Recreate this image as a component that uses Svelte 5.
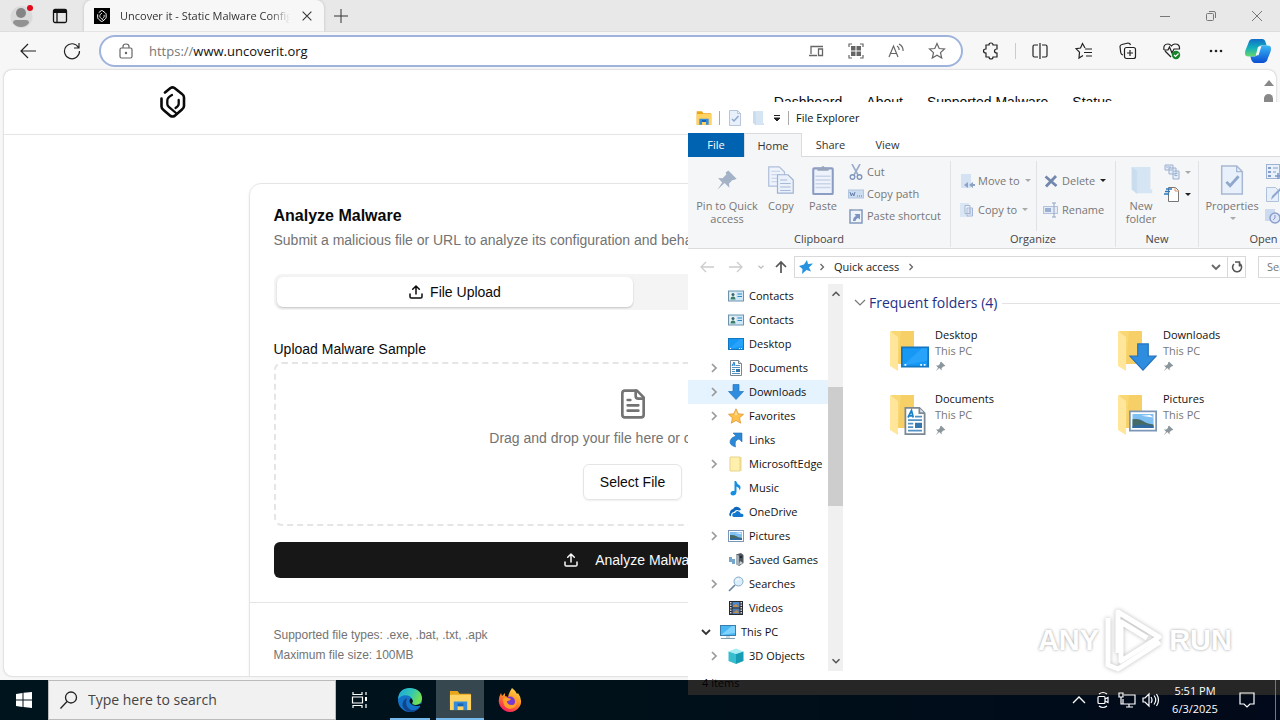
<script>
  const links = ['Dashboard', 'About', 'Supported Malware', 'Status'];
  const tree = [
    { label: 'Contacts', icon: 'contact' },
    { label: 'Contacts', icon: 'contact' },
    { label: 'Desktop', icon: 'desktop' },
    { label: 'Documents', icon: 'document', expandable: true },
    { label: 'Downloads', icon: 'download', expandable: true, active: true },
    { label: 'Favorites', icon: 'favorite', expandable: true },
    { label: 'Links', icon: 'link' },
    { label: 'MicrosoftEdge', icon: 'yellow', expandable: true },
    { label: 'Music', icon: 'music' },
    { label: 'OneDrive', icon: 'cloud' },
    { label: 'Pictures', icon: 'picture', expandable: true },
    { label: 'Saved Games', icon: 'games' },
    { label: 'Searches', icon: 'lens', expandable: true },
    { label: 'Videos', icon: 'video' },
    { label: 'This PC', icon: 'pc', root: true },
    { label: '3D Objects', icon: 'cube', expandable: true }
  ];
  const folders = [
    { label: 'Desktop', icon: 'desktop' },
    { label: 'Downloads', icon: 'download' },
    { label: 'Documents', icon: 'document' },
    { label: 'Pictures', icon: 'picture' }
  ];
</script>

{#snippet glyph(name, size = 16)}
  <svg width={size} height={size} viewBox="0 0 16 16" fill="none" aria-hidden="true">
    {#if name === 'contact'}
      <rect x=".5" y="3" width="15" height="10" fill="#cfe8f7" stroke="#6f93ad" />
      <rect x="2" y="4.500" width="6" height="7" fill="#e9f4ef" />
      <circle cx="5" cy="6.500" r="1.500" fill="#3c6470" /><path d="M2.500 11.500q0-3 2.500-3t2.500 3z" fill="#3c7d6c" />
      <path d="M9.500 6h4.500M9.500 8.500h4.500" stroke="#3985c0" />
    {:else if name === 'desktop'}
      <rect x=".5" y="2.500" width="15" height="11" fill="#1698f5" stroke="#1276c0" />
      <path d="M1 13 12 3h3v7z" fill="#35aaff" opacity=".6" /><path d="M2 12.500h1m8 0h1m1 0h1" stroke="#fff" />
    {:else if name === 'document'}
      <path d="M2.500.5h8l3 3v12h-11z" fill="#fff" stroke="#7b8791" /><path d="M10.500.5v3h3" fill="#dfe8ee" stroke="#7b8791" />
      <path d="M4 6 6 2l1 4M4.500 5h2" stroke="#1c80c8" /><path d="M8 5.500h4M4 7.500h8M4 9.500h3M4 11.500h3M4 13.500h8" stroke="#5293c4" />
      <rect x="8" y="9" width="4" height="3" fill="#3576ad" />
    {:else if name === 'download'}
      <path d="M5 .5h6v7h4.500L8 15.500.5 7.500H5z" fill="#2f8de0" stroke="#2673bd" stroke-width=".7" />
    {:else if name === 'favorite'}
      <path d="m8 .8 2.200 5 5.300.5-4 3.600 1.200 5.300L8 12.400l-4.700 2.800 1.200-5.300-4-3.600 5.300-.5z" fill="#ffc24d" stroke="#df9433" stroke-width=".8" /><path d="m8 3 1.500 4-3 .2z" fill="#ffe09a" />
    {:else if name === 'link'}
      <path d="M5 1h9v9l-3-3q-5 1-3.500 8Q1 13 2.200 8.500 3.500 5 8 4z" fill="#2c87d6" stroke="#2371b7" stroke-width=".6" />
    {:else if name === 'yellow'}
      <path d="M2 1h10v14H2z" fill="#fff0ae" stroke="#e7d48a" /><path d="M12 1h1.500v14H12z" fill="#ecd98d" />
    {:else if name === 'music'}
      <path d="M8 1q1 3 3.500 4.200 2 2 0 5.300 0-3-3-4V12q-.5 3.500-3.500 3.500-2.500 0-2.500-2 0-2.500 4-2.700V1z" fill="#168ee2" />
    {:else if name === 'cloud'}
      <path d="M3 12.500q-3-1.300-1-4Q2 5.500 5 5q2-3.500 6-1.500 1.500.8 2 2.500l-2 .5Q8 5 6 8q-2.500.2-3 2.500z" fill="#0c67bd" />
      <path d="M6 13q-2.500-.5-1.500-3 1-1.500 2.500-1 1.500-3 4-1.500 1.200.6 1.500 2 3 .2 3 2 0 1.500-2 1.500z" fill="#1278cf" />
    {:else if name === 'picture'}
      <rect x=".5" y="2.500" width="15" height="11" fill="#fff" stroke="#7c96b8" /><rect x="2" y="4" width="12" height="8" fill="#7fc0f3" />
      <path d="M2 9V7q4-.5 6 1t6 2v2H2z" fill="#466a66" /><path d="M2 11q5-2 12 0v1H2z" fill="#306aa1" /><path d="m7 5 5-.5L14 6z" fill="#fff" />
    {:else if name === 'games'}
      <path d="M8 2.500 13 1l2.500 2v8L11 14l-3-2z" fill="#51575f" /><path d="m8 2.500 3 1V14l-3-2z" fill="#a5b0b7" />
      <path d="M1 5h3v2h3v5H4v-2H1z" fill="#74a6ce" /><circle cx="13" cy="5" r="1.300" fill="#242a32" /><path d="m12 9 3 2-4 2z" fill="#cfd4d7" />
    {:else if name === 'lens'}
      <circle cx="10.500" cy="5.500" r="4.500" fill="#d9effb" stroke="#8aaac6" /><path d="m7 9-6 6" stroke="#6d87a3" stroke-width="1.700" /><path d="M8 5q1-2 3-2" stroke="#fff" />
    {:else if name === 'video'}
      <rect x="1" y="1" width="14" height="14" fill="#26292f" /><rect x="4.500" y="2" width="7" height="5.500" fill="#5187c6" /><rect x="4.500" y="8.500" width="7" height="5.500" fill="#557eaf" />
      <path d="m5 6 3-2 3 3H5zm0 7 4-3 2 3z" fill="#c38f46" /><path d="M2.800 2v12M13.200 2v12" stroke="#fff" stroke-width="1.200" stroke-dasharray="1.500 1" />
    {:else if name === 'pc'}
      <rect x=".5" y="1.500" width="15" height="10" fill="#49b7f4" stroke="#397dab" /><path d="M1 11 12 2h3v7z" fill="#80d3ff" /><path d="M6 12h4v2H6z" fill="#c9d7e0" /><path d="M1 14.500h14" stroke="#7e9cb0" />
    {:else if name === 'cube'}
      <path d="m8 .5 7.500 3L8 6 .5 3.500z" fill="#a6edf5" /><path d="M.5 3.500 8 6v10l-7.500-3z" fill="#36bdcf" /><path d="M15.500 3.500 8 6v10l7.500-3z" fill="#159db5" />
    {:else if name === 'pin'}
      <path d="m9 1 6 6-2 1-1 0-2.500 2.500.2 3.200-3.500-3.500L1 15l3.500-5.200L1.500 6.500l3.300.2L7.500 4 7 2.500z" fill="currentColor" />
    {:else if name === 'upload'}
      <path d="M8 10V2M4.700 5.300 8 2l3.300 3.300M2 10v2.700q0 1.300 1.300 1.300h9.400q1.300 0 1.300-1.300V10" stroke="currentColor" stroke-width="1.500" stroke-linecap="round" stroke-linejoin="round" />
    {:else if name === 'close'}
      <path d="m3 3 10 10M13 3 3 13" stroke="currentColor" stroke-width="1.200" />
    {:else if name === 'right'}
      <path d="m6 4 4 4-4 4" stroke="currentColor" stroke-width="1.700" />
    {:else if name === 'down'}
      <path d="m4 6 4 4 4-4" stroke="currentColor" stroke-width="1.800" />
    {:else if name === 'up'}
      <path d="m4 10 4-4 4 4" stroke="currentColor" stroke-width="1.800" />
    {:else if name === 'props'}
      <path d="M2.500.5h8l3 3v12h-11z" fill="#e8f0fc" stroke="#a8b8d2" stroke-width=".8" /><path d="M10.500.5v3h3" stroke="#a8b8d2" stroke-width=".7" /><path d="m5 9 2 2 4.500-5" stroke="#8fa7cb" stroke-width="1.500" />
    {:else if name === 'newfolder'}
      <path d="M3 1h10v12h1v2H5z" fill="#d6e5f3" /><path d="M3 1 6 3v12.500L3 13z" fill="#c9ddef" />
    {:else if name === 'copy'}
      <path d="M1 .5h6l3 3v8H1z" fill="#eff4fc" stroke="#aebfdb" stroke-width=".7" /><path d="M2.500 3h5M2.500 5h5M2.500 7h5M2.500 9h5" stroke="#c1cfe5" stroke-width=".6" /><path d="M6 5h6l3 3v7.500H6z" fill="#eaf1fb" stroke="#9eb3d3" stroke-width=".7" /><path d="M7.500 8h4M7.500 10h6M7.500 12h6M7.500 14h6" stroke="#a5b9d8" stroke-width=".6" />
    {:else if name === 'paste'}
      <rect x="2.800" y="1.800" width="10.400" height="13.700" rx=".5" fill="#edf2fb" stroke="#8c9dc4" stroke-width="1.100" /><path d="M5 3V1.500h2q1-2 2 0h2V3z" fill="#98a4bb" /><path d="M4 6h8M4 8h8M4 10h8M4 12h8" stroke="#c9d4e8" stroke-width=".7" />
    {:else if name === 'cut'}
      <path d="m4 0 6 11M12 0 6 11" stroke="#9aaccc" stroke-width="1.600" /><circle cx="4.500" cy="13" r="2.300" stroke="#8197bc" stroke-width="1.500" /><circle cx="11.500" cy="13" r="2.300" stroke="#8197bc" stroke-width="1.500" />
    {:else if name === 'path'}
      <rect x=".5" y="4" width="15" height="8" fill="#ccdcf1" stroke="#b2c5e1" /><path d="m2 6 1.300 4L4.500 7l1.300 3L7 6M9 10h1m1 0h1m1 0h1" stroke="#647fa9" />
    {:else if name === 'shortcut'}
      <rect x="2" y="2" width="12" height="13" fill="#eff4fc" stroke="#8299bd" stroke-width="1.500" /><path d="M5 3V1h6v2" fill="#aab7cc" /><path d="M5 13q0-4 3-5L6.500 6H12v5.500L10 10q-2 .5-2.500 3z" fill="#7b95bf" />
    {:else if name === 'move'}
      <path d="M2 1h10v14H2z" fill="#d4e2f3" /><path d="m14 9-4 3 4 3v-2h2v-2h-2zM9 9l-4 3 4 3z" fill="#8ca3c7" />
    {:else if name === 'copyto'}
      <path d="M1 1h9v14H1z" fill="#dbe6f4" /><path d="M6 3.500h5v8H6zM8 6h5.500v8H8z" fill="#edf3fb" stroke="#a4b6d5" /><path d="M9.500 8h3m-3 2h3m-3 2h3" stroke="#a4b6d5" />
    {:else if name === 'delete'}
      <path d="m2.500 3.500 11 9.500M13 3 3 13.500" stroke="#7388ac" stroke-width="2.800" />
    {:else if name === 'rename'}
      <rect x=".5" y="4.500" width="14" height="7" fill="#e3ebf7" stroke="#b3c3de" /><path d="M2 6h6v4H2z" fill="#9bb0d1" /><path d="M9 1h4M9 15h4M11 1v14" stroke="#91a4c4" />
    {:else if name === 'items'}
      <path d="M1 1h8v5H1zM5 4h7v6H5zM9 7h6v8H9z" fill="#e4edf8" stroke="#9cb1cf" /><path d="M2 3h5M10.500 9.500h3m-3 2h3" stroke="#9cb1cf" />
    {:else if name === 'easy'}
      <path d="M4.500 1.500h7l3 3v11h-10z" fill="#fff" stroke="#777" /><path d="M11 1v4h4" stroke="#d39365" /><path d="M2 3h6M1 5.500h5M0 8h5" stroke="#277ac0" stroke-width="1.300" />
    {:else if name === 'open'}
      <rect x="1.500" y=".5" width="13" height="14" fill="#e8f0fb" stroke="#9eb2d4" /><path d="M3 3h3v2H3zM3 7h3v2H3zM3 11h3v2H3z" fill="#849ec9" /><path d="M8 4h5M8 8h3" stroke="#849ec9" /><path d="M10 12h6m-3-3v6" stroke="#7c97c5" stroke-width="1.500" />
    {:else if name === 'edit'}
      <path d="M1.500 1.500h9l3 3v11h-12z" fill="#e7effa" stroke="#b0c1dc" /><path d="m6 14 1-4 8-8 1 2-8 8z" fill="#90a8ce" />
    {:else if name === 'history'}
      <path d="M0 1h10v12H0z" fill="#cddbf0" /><circle cx="10" cy="10" r="5" fill="#dfe6fa" stroke="#8ba0cc" stroke-width="1.500" /><path d="M10 7v3l-2 2" stroke="#8098c8" />
    {/if}
  </svg>
{/snippet}

{#snippet explorerIcon(size = 18)}
  <svg width={size} height={size} viewBox="0 0 24 24" aria-hidden="true">
    <path d="M1 2h8l2 3h11q1 0 1 1v16H1z" fill="#e9a61b" /><path d="M1 6h22v16H1z" fill="#ffd264" /><path d="M5 22v-9h14v9h-4v-4H9v4z" fill="#368bd8" /><path d="M9 15h6v3H9z" fill="#1465b4" />
  </svg>
{/snippet}

{#snippet mark(size)}
  <svg width={size} height={size} viewBox="0 0 32 32" fill="none" stroke="currentColor" stroke-width="2.600" stroke-linejoin="round" stroke-linecap="round" aria-hidden="true">
    <path d="M8 6.500 13.500 2q2-1.300 4 0L25 8q2 1.300 2 3.500V20q0 2-2 3.500L17.500 30q-2 1-4 0L6.500 24q-2-1.500-2-3.500v-8" /><path d="M15 9q-4.700 2.500-4.700 5.500V18q0 1.500 1.500 2.800L19 27M21.700 14v4q0 2-3.200 4" stroke-width="2.300" />
  </svg>
{/snippet}

<div class="desktop">
  <main class="browser">
    <div class="tabstrip">
      <button class="profile" aria-label="Profile">
        <svg width="24" height="26" viewBox="0 0 24 26"><circle cx="11.500" cy="14" r="11" fill="#dadada" /><circle cx="11" cy="10" r="5" fill="#858585" /><path d="M3 20q0-3 3-3h10q3 0 3 3-3 4-8 4t-8-4z" fill="#929292" /><circle cx="20" cy="5" r="3" fill="#e00b1c" /></svg>
      </button>
      <button class="actions" aria-label="Tab actions">
        <svg width="16" height="16" viewBox="0 0 16 16" fill="none" stroke="#111" stroke-width="1.300"><rect x="1.500" y="1.500" width="13" height="13" rx="1.500" /><path d="M1.500 3.500h13" stroke-width="3" /><path d="M5 3v11" /></svg>
      </button>
      <div class="tab">
        <span class="favicon">{@render mark(12)}</span>
        <span class="tabtitle">Uncover it - Static Malware Config</span>
        <button class="tabclose" aria-label="Close tab">{@render glyph('close', 14)}</button>
      </div>
      <button class="plus" aria-label="New tab"><svg width="16" height="16" viewBox="0 0 16 16" stroke="#333"><path d="M8 1v14M1 8h14" /></svg></button>
      <div class="controls">
        <button aria-label="Minimize"><svg width="12" height="12" viewBox="0 0 12 12" stroke="#777"><path d="M1 6.500h10" /></svg></button>
        <button aria-label="Restore"><svg width="12" height="12" viewBox="0 0 12 12" fill="none" stroke="#777"><rect x="1.500" y="3.500" width="7" height="7" rx="1" /><path d="M4 1.500h5q1.500 0 1.500 1.500v5" /></svg></button>
        <button aria-label="Close"><svg width="12" height="12" viewBox="0 0 12 12" stroke="#777"><path d="m1 1 10 10M11 1 1 11" /></svg></button>
      </div>
    </div>

    <div class="toolbar">
      <button aria-label="Back"><svg width="18" height="18" viewBox="0 0 18 18" fill="none" stroke="#222" stroke-width="1.200"><path d="M17 9H2M9 2 2 9l7 7" /></svg></button>
      <button aria-label="Refresh"><svg width="18" height="18" viewBox="0 0 18 18" fill="none" stroke="#222" stroke-width="1.200"><path d="M15.500 5.500A7.500 7.500 0 1 0 16.500 9M16 1v5h-5" /></svg></button>
      <div class="address">
        <svg width="14" height="16" viewBox="0 0 14 16" fill="none" stroke="#666" stroke-width="1.200"><rect x="1" y="5" width="12" height="10" rx="1.500" /><path d="M4 5V3.500Q4 1 7 1t3 2.500V5" /><circle cx="7" cy="10" r=".6" fill="#666" /></svg>
        <span class="url"><span>https://</span>www.uncoverit.org</span>
        <button aria-label="Send to devices"><svg width="16" height="16" viewBox="0 0 16 16" fill="none" stroke="#666" stroke-width="1.300"><path d="M3 11V3.500h12M1 12.500h8M10.500 6h4v6.500h-4z" /></svg></button>
        <button aria-label="QR code"><svg width="16" height="16" viewBox="0 0 16 16" fill="#666"><path d="M3 3h4.500v4.500H3zM8.500 3H13v4.500H8.500zM3 8.500h4.500V13H3zM8.500 8.500H13V13H8.500z" /><path d="M1 4V1h3m8 0h3v3m0 8v3h-3m-8 0H1v-3" fill="none" stroke="#666" stroke-width="1.200" /></svg></button>
        <button aria-label="Read aloud"><svg width="16" height="16" viewBox="0 0 16 16" fill="none" stroke="#666" stroke-width="1.200"><path d="M1 14 5.500 3 10 14M2.500 10.500h6M9 3q2.500 1.500 2 4M11 1q4.500 2.500 4 7" /></svg></button>
        <button aria-label="Add to favorites"><svg width="18" height="18" viewBox="0 0 18 18" fill="none" stroke="#666" stroke-width="1.200"><path d="m9 1.500 2.200 5 5.300.5-4 3.600 1.200 5.400L9 13.200 4.300 16l1.200-5.400-4-3.600 5.300-.5z" /></svg></button>
      </div>
      <div class="tools">
        <button aria-label="Extensions"><svg width="18" height="18" viewBox="0 0 18 18" fill="none" stroke="#222" stroke-width="1.200"><path d="M4 3h3q0-2 2-2t2 2h4v4q-2.500 0-2.500 2t2.500 2v4h-4q0 2-2 2t-2-2H4v-4q-2.500 0-2.500-2T4 7z" /></svg></button>
        <span class="rule"></span>
        <button aria-label="Split screen"><svg width="18" height="18" viewBox="0 0 18 18" fill="none" stroke="#222" stroke-width="1.200"><path d="M7 3H3.500Q2 3 2 4.500v9Q2 15 3.500 15H7M11 3h3.500Q16 3 16 4.500v9q0 1.500-1.500 1.500H11M9 1v16" /></svg></button>
        <button aria-label="Favorites"><svg width="18" height="18" viewBox="0 0 18 18" fill="none" stroke="#222" stroke-width="1.200"><path d="M10 6 7.500 1.500 5.500 6l-4.500.7 3.500 3.500L4 16l4-2.500M10 7h7M9 10.500h8M11 14h6" /></svg></button>
        <button aria-label="Collections"><svg width="18" height="18" viewBox="0 0 18 18" fill="none" stroke="#222" stroke-width="1.200"><path d="M4 13q-2-.5-2.300-2.500L1 4.500Q1 3 3 2.500L9 1q2 0 2.500 2" /><rect x="5.500" y="5.500" width="11" height="11" rx="2" /><path d="M11 8v6m-3-3h6" /></svg></button>
        <button aria-label="Browser essentials"><svg width="18" height="18" viewBox="0 0 18 18" fill="none" stroke="#222" stroke-width="1.200"><path d="M8 15 2 9M1 8q-1-6 4-6 2 0 3.500 2Q10 2 12 2q5 0 4.500 5M1 8h4l1.500-3L9 11l2-4h6" /><circle cx="13" cy="13" r="4.200" fill="#168529" stroke="none" /><path d="m11 13 1.500 1.500 3-3" stroke="#fff" /></svg></button>
        <button aria-label="Settings and more"><svg width="18" height="18" viewBox="0 0 18 18" fill="#222"><circle cx="4" cy="9" r="1.300" /><circle cx="9" cy="9" r="1.300" /><circle cx="14" cy="9" r="1.300" /></svg></button>
        <button aria-label="Copilot">
          <svg width="26" height="26" viewBox="0 0 24 24">
            <defs><linearGradient id="cpa" x2="0" y2="1"><stop stop-color="#116fc9" /><stop offset=".5" stop-color="#11aebd" /><stop offset="1" stop-color="#65d86a" /></linearGradient><linearGradient id="cpb" x2="0" y2="1"><stop stop-color="#39b7f5" /><stop offset="1" stop-color="#0a4fd3" /></linearGradient></defs>
            <path d="M7 1h9q2 0 3 3l1 3h-5q-2 0-3 3l-1.500 6q-.5 1-2 1H3q-3 0-3-3 0-2 1-4l2-5q1-4 4-4z" fill="url(#cpa)" /><path d="M17 23H9q-3 0-4-6h4q2 0 2.500-2L14 9q.5-2 3-2h4q3 0 3 3 0 2-1 4l-2 5q-1 4-4 4z" fill="url(#cpb)" /><path d="M12 8h3l-2.500 8H10z" fill="#f7f7f7" />
          </svg>
        </button>
      </div>
    </div>

    <div class="viewport">
      <div class="page">
        <header>
          <a class="brand" href="#home" aria-label="Uncover it">{@render mark(32)}</a>
          <nav>{#each links as l}<a href="#{l}">{l}</a>{/each}</nav>
        </header>
        <section class="card">
          <div class="cardbody">
            <h1>Analyze Malware</h1>
            <p class="lead">Submit a malicious file or URL to analyze its configuration and behavior</p>
            <div class="segments">
              <button class="on">{@render glyph('upload')}File Upload</button>
              <button>URL</button>
            </div>
            <div class="samplelabel">Upload Malware Sample</div>
            <div class="drop">
              <svg width="32" height="32" viewBox="0 0 24 24" fill="none" stroke="#737373" stroke-width="2" stroke-linecap="round" stroke-linejoin="round"><path d="M15 2H6a2 2 0 0 0-2 2v16a2 2 0 0 0 2 2h12a2 2 0 0 0 2-2V7Z" /><path d="M14 2v4a2 2 0 0 0 2 2h4M10 9H8M16 13H8M16 17H8" /></svg>
              <p>Drag and drop your file here or click to browse</p>
              <button>Select File</button>
            </div>
            <button class="submit">{@render glyph('upload')}Analyze Malware</button>
          </div>
          <footer><p>Supported file types: .exe, .bat, .txt, .apk</p><p>Maximum file size: 100MB</p></footer>
        </section>
      </div>
      <div class="pagescroll"><svg width="10" height="6" viewBox="0 0 10 6"><path d="M0 6 5 0l5 6z" fill="#888" /></svg><span></span></div>
    </div>
  </main>

  <section class="explorer" aria-label="File Explorer">
    <div class="caption">
      {@render explorerIcon(16)}<span class="rule"></span>
      {@render glyph('props')}{@render glyph('newfolder')}
      <svg width="8" height="8" viewBox="0 0 8 8"><path d="M1 1.500h6M1 4h6L4 7z" stroke="#222" fill="#222" /></svg>
      <span class="rule"></span><span>File Explorer</span>
    </div>
    <div class="ribbontabs"><button class="file">File</button><button class="home">Home</button><button>Share</button><button>View</button></div>
    <div class="ribbon">
      <div class="group clip">
        <div class="commands">
          <button class="big wideart"><span class="art">{@render glyph('pin', 22)}</span>Pin to Quick access</button>
          <button class="big short"><span class="art">{@render glyph('copy', 28)}</span>Copy</button>
          <button class="big short"><span class="art">{@render glyph('paste', 30)}</span>Paste</button>
          <div class="stack">
            <button>{@render glyph('cut')}Cut</button><button>{@render glyph('path')}Copy path</button><button>{@render glyph('shortcut')}Paste shortcut</button>
          </div>
        </div>
        <h2>Clipboard</h2>
      </div>
      <div class="group organize">
        <div class="commands">
          <div class="stack wide"><button>{@render glyph('move')}Move to<i></i></button><button>{@render glyph('copyto')}Copy to<i></i></button></div>
          <div class="stack wide divided"><button>{@render glyph('delete')}Delete<i class="dark"></i></button><button>{@render glyph('rename')}Rename</button></div>
        </div>
        <h2>Organize</h2>
      </div>
      <div class="group new">
        <div class="commands">
          <button class="big short"><span class="art">{@render glyph('newfolder', 30)}</span>New folder</button>
          <div class="stack"><button aria-label="New item">{@render glyph('items')}<i></i></button><button aria-label="Easy access">{@render glyph('easy')}<i class="dark"></i></button></div>
        </div>
        <h2>New</h2>
      </div>
      <div class="group opening">
        <div class="commands">
          <button class="big wideart"><span class="art">{@render glyph('props', 30)}</span>Properties<i></i></button>
          <div class="stack"><button aria-label="Open">{@render glyph('open')}</button><button aria-label="Edit">{@render glyph('edit')}</button><button aria-label="History">{@render glyph('history')}</button></div>
        </div>
        <h2>Open</h2>
      </div>
    </div>
    <div class="location">
      <button aria-label="Back"><svg width="14" height="12" viewBox="0 0 14 12" fill="none" stroke="#ccc" stroke-width="1.300"><path d="M14 6H2M6 1 1 6l5 5" /></svg></button>
      <button aria-label="Forward"><svg width="14" height="12" viewBox="0 0 14 12" fill="none" stroke="#ccc" stroke-width="1.300"><path d="M0 6h12M8 1l5 5-5 5" /></svg></button>
      <button class="recent" aria-label="Recent locations">{@render glyph('down', 10)}</button>
      <button aria-label="Up"><svg width="14" height="14" viewBox="0 0 14 14" fill="none" stroke="#555" stroke-width="1.700"><path d="M7 13V2M2 7l5-5 5 5" /></svg></button>
      <div class="crumbs">
        <svg width="14" height="14" viewBox="0 0 14 14"><path d="m8 0 1 4 5-.5-4 4 2 4-4.500-1.500L3 14l.5-5L0 6l5-1.500z" fill="#2793df" /></svg>
        {@render glyph('right', 12)}<span>Quick access</span>{@render glyph('right', 12)}
        <button class="history" aria-label="Previous locations">{@render glyph('down', 16)}</button>
        <button class="reload" aria-label="Refresh"><svg width="12" height="12" viewBox="0 0 12 12" fill="none" stroke="#555" stroke-width="1.600"><path d="M8.500 2.500A4.500 4.500 0 1 1 3 3M4 1H8.500v4.500" /></svg></button>
      </div>
      <input class="find" aria-label="Search Quick access" placeholder="Search Quick access" />
    </div>
    <div class="panes">
      <ul class="tree">
        {#each tree as t}
          <li class:active={t.active} class:root={t.root}>
            <button><span class="chev">{#if t.expandable}{@render glyph('right', 16)}{:else if t.root}{@render glyph('down', 16)}{/if}</span>{@render glyph(t.icon)}<span>{t.label}</span></button>
          </li>
        {/each}
      </ul>
      <div class="treescroll">{@render glyph('up', 14)}<span></span>{@render glyph('down', 14)}</div>
      <div class="files">
        <h3><svg width="12" height="8" viewBox="0 0 12 8" fill="none" stroke="#777" stroke-width="1.200"><path d="m1 1 5 5 5-5" /></svg>Frequent folders (4)<span></span></h3>
        <div class="foldergrid">
          {#each folders as f}
            <button class="folder">
              <span class="folderart">
                <svg width="26" height="42" viewBox="0 0 26 42"><path d="M2 1h23v33H8z" fill="#f9d772" /><path d="M12 1h13v33H9z" fill="#f5cd63" opacity=".7" /><path d="m1 1 8 6v34l-8-5z" fill="#ffe69b" /></svg>
                <span class="badge">{@render glyph(f.icon, 28)}</span>
              </span>
              <span class="meta"><b>{f.label}</b><small>This PC</small><span class="pinned">{@render glyph('pin', 11)}</span></span>
            </button>
          {/each}
        </div>
      </div>
    </div>
    <div class="status">4 items</div>
  </section>

  <div class="watermark">
    <span>ANY</span>
    <svg width="62" height="64" viewBox="0 0 62 64" fill="none" stroke="#fff" stroke-width="5" stroke-linejoin="round"><path d="M15 45V4l41 25-38 24V14l26 16M5 10v47l10 4 42-27" /></svg>
    <span>RUN</span>
  </div>

  <div class="taskbar">
    <button class="start" aria-label="Start"><svg width="16" height="16" viewBox="0 0 16 16" fill="#fff"><path d="m0 2 6.500-1v6.500H0zM7.500.8 16 0v7.500H7.500zM0 8.500h6.500V15L0 14zM7.500 8.500H16V16l-8.500-1z" /></svg></button>
    <label class="tasksearch">
      <svg width="18" height="18" viewBox="0 0 18 18" fill="none" stroke="#222" stroke-width="1.300"><circle cx="11" cy="6.500" r="5.500" /><path d="m7 10.500-6.500 7" /></svg>
      <input aria-label="Search" placeholder="Type here to search" />
    </label>
    <button class="app" aria-label="Task view"><svg width="18" height="18" viewBox="0 0 18 18" fill="none" stroke="#fff" stroke-width="1.200"><path d="M2 1v2.500h9V1M2 17v-2.500h9V17M1.500 6h10v6h-10zM15 1v3m0 9v4" /><path d="M15 6v4" stroke-width="2" /></svg></button>
    <button class="app running" aria-label="Microsoft Edge">
      <svg width="26" height="26" viewBox="0 0 26 26">
        <defs><linearGradient id="edge" x2="1" y2=".4"><stop stop-color="#1aa5df" /><stop offset=".6" stop-color="#35c8b0" /><stop offset="1" stop-color="#72df53" /></linearGradient></defs>
        <circle cx="13" cy="13" r="12" fill="#1373c9" /><path d="M1 12Q2 1 13 1q12 1 12 11-1 6-7 6-5-.5-3-3 1-5-4-6.500Q5 7 1 12z" fill="url(#edge)" /><path d="M10 11q-3 8 4 12 4 1 8-2-5 6-12 3-6-3-4-9 1-3 4-4z" fill="#12448e" /><path d="M14 11q-3 3 0 6 4 3 9 1.500l1 2.500 2-1v-4l-3 1q-5 2-7.500 0-1-1 .5-2.500 0-2-2-3.500z" fill="#001119" />
      </svg>
    </button>
    <button class="app running current" aria-label="File Explorer">{@render explorerIcon(23)}</button>
    <button class="app" aria-label="Firefox">
      <svg width="24" height="24" viewBox="0 0 24 24">
        <defs><linearGradient id="fx" x1=".8" x2=".3" y2="1"><stop stop-color="#ffe14a" /><stop offset=".5" stop-color="#ff8a22" /><stop offset="1" stop-color="#f31762" /></linearGradient></defs>
        <path d="M14 0q4 3 5 6l1-1q5 7 2 13-4 6-10 6T2 18Q-1 12 3 5l1 3 3-3v3l3 1q1-5 4-9z" fill="url(#fx)" /><circle cx="12" cy="13.500" r="5" fill="#7938d0" /><path d="M5 11q2-2 5-1l3 1q-1 2-4 2 0 4 5 4 4 0 4-6 2 5-1 8-4 3-8 1-4-2-4-9z" fill="#ffa02b" />
      </svg>
    </button>
    <div class="tray">
      <button aria-label="Hidden icons"><svg width="14" height="14" viewBox="0 0 14 14" fill="none" stroke="#fff" stroke-width="1.300"><path d="m1 10 6-6 6 6" /></svg></button>
      <button aria-label="Meet now"><svg width="16" height="18" viewBox="0 0 16 18" fill="none" stroke="#fff" stroke-width="1.200"><rect x="3" y="5.500" width="7" height="7" rx="1" /><path d="m10 8 3-1.500v5L10 10M4 3q4-3 8 0M4 15q4 3 8 0" /></svg></button>
      <button aria-label="Network"><svg width="18" height="16" viewBox="0 0 18 16" fill="none" stroke="#fff" stroke-width="1.200"><path d="M6 3h11v9H5V7M8 15h7m-4-3v3M1 1h4v4H1zM3 5v7h2" /></svg></button>
      <button aria-label="Volume"><svg width="18" height="16" viewBox="0 0 18 16" fill="none" stroke="#fff" stroke-width="1.200"><path d="M1 6h2l4-4v12l-4-4H1zM9 5q2 3 0 6M12 3.500q3.500 4.500 0 9M14.500 2q4 6 0 12" /></svg></button>
      <div class="clock"><span>5:51 PM</span><span>6/3/2025</span></div>
      <button class="notify" aria-label="Notifications"><svg width="16" height="16" viewBox="0 0 16 16" fill="none" stroke="#fff" stroke-width="1.200"><path d="M1 1h14v11h-4l-3 3-3-3H1z" /></svg></button>
      <button class="peek" aria-label="Show desktop"></button>
    </div>
  </div>
</div>

<style>
  :global(body) { margin: 0; }
  * { box-sizing: border-box; }
  h1, h2, h3, p, ul { margin: 0; padding: 0; }
  button { display: flex; align-items: center; justify-content: center; border: 0; padding: 0; background: none; font: inherit; color: inherit; }
  svg { display: block; flex: none; }
  a { color: inherit; text-decoration: none; }
  .desktop { position: relative; display: flex; flex-direction: column; height: 100vh; overflow: hidden; background: linear-gradient(90deg, #0088c0, #0070b0 50%, #1040b0); font: 11px/16px "Open Sans", "Noto Sans", sans-serif; color: #111; white-space: nowrap; }

  .browser { flex: 1; min-height: 0; display: flex; flex-direction: column; background: #f7f7f7; }
  .tabstrip { display: flex; align-items: center; height: 32px; flex: none; background: #e8e8e8; border-bottom: 1px solid #dedede; }
  .profile { width: 44px; }
  .actions { width: 32px; }
  .tab { display: flex; align-items: center; gap: 10px; width: 240px; height: 32px; margin-left: 8px; padding: 0 10px; background: #f7f7f7; border-radius: 8px 8px 0 0; box-shadow: 0 0 3px #bbb; clip-path: inset(0 -4px 0 -4px); }
  .favicon { display: grid; place-items: center; width: 16px; height: 16px; background: #000; color: #fff; flex: none; }
  .tabtitle { flex: 1; overflow: hidden; color: #333; mask-image: linear-gradient(90deg, #000 88%, transparent); }
  .tabclose { color: #333; }
  .plus { width: 34px; }
  .controls { display: flex; margin-left: auto; }
  .controls button { width: 46px; height: 32px; }
  .toolbar { display: flex; align-items: center; height: 38px; flex: none; padding: 0 2px 0 8px; }
  .toolbar > button { width: 40px; height: 32px; margin-right: 4px; }
  .toolbar > button + button { margin-right: 7px; }
  .address { flex: 1; display: flex; align-items: center; gap: 24px; height: 32px; padding: 0 15px 0 18px; border: 2px solid #9fb4dd; border-radius: 16px; background: #fff; }
  .url { flex: 1; margin-left: -8px; font-size: 13px; line-height: 20px; }
  .url span { color: #777; }
  .tools { display: flex; align-items: center; margin-left: 14px; }
  .tools button { width: 44px; height: 32px; }
  .tools button:first-child { width: 28px; }
  .tools button:last-child { width: 40px; }
  .tools .rule { width: 1px; height: 16px; margin: 0 2px 0 10px; background: #ccc; }
  .viewport { flex: 1; min-height: 0; display: flex; margin: 0 4px 4px; border-radius: 8px; background: #fff; box-shadow: 0 0 2px #aaa; overflow: hidden; }
  .page { flex: 1; font-family: "Liberation Sans", Arial, sans-serif; font-size: 14px; line-height: 20px; color: #0a0a0a; overflow: hidden; }
  .pagescroll { width: 15px; padding: 10px 3px; display: flex; flex-direction: column; align-items: center; gap: 8px; }
  .pagescroll span { width: 9px; height: 200px; border-radius: 5px; background: #888; }
  header { display: flex; align-items: center; justify-content: space-between; height: 65px; padding: 0 149px 0 153px; border-bottom: 1px solid #e5e5e5; }
  nav { display: flex; gap: 24px; }
  .card { width: 768px; max-width: 100%; margin: 48px auto 0; border: 1px solid #e5e5e5; border-radius: 12px; box-shadow: 0 1px 3px #0001; }
  .cardbody { display: flex; flex-direction: column; padding: 24px; }
  h1 { font-size: 16px; line-height: 16px; }
  .lead { margin: 6px 0 24px; color: #737373; }
  .segments { display: flex; height: 36px; padding: 3px; border-radius: 8px; background: #f4f4f4; }
  .segments button { flex: 1; gap: 6px; border-radius: 6px; }
  .segments .on { background: #fff; box-shadow: 0 1px 2px #0003; }
  .samplelabel { margin-top: 29px; }
  .drop { display: flex; flex-direction: column; align-items: center; margin-top: 3px; padding: 24px; border: 2px dashed #e5e5e5; border-radius: 8px; }
  .drop p { margin: 8px 0 16px; color: #737373; }
  .drop button { height: 36px; padding: 0 16px; border: 1px solid #e5e5e5; border-radius: 6px; box-shadow: 0 1px 2px #0001; }
  .submit { gap: 16px; height: 36px; margin-top: 16px; border-radius: 6px; background: #171717; color: #fafafa; }
  footer { padding: 22px 24px; border-top: 1px solid #e5e5e5; font-size: 12px; color: #737373; }

  .explorer { position: absolute; left: 688px; right: -180px; top: 102px; bottom: 25px; display: flex; flex-direction: column; background: #fff; }
  .caption { display: flex; align-items: center; gap: 7px; height: 31px; padding-left: 8px; flex: none; }
  .caption .rule { width: 1px; height: 14px; background: #aaa; }
  .ribbontabs { display: flex; height: 24px; flex: none; border-bottom: 1px solid #dadbdc; color: #333; }
  .ribbontabs button { width: 57px; height: 24px; }
  .ribbontabs .file { width: 56px; background: #0063b1; color: #fff; }
  .ribbontabs .home { width: 58px; border: 1px solid #dadbdc; border-bottom: 0; background: #f5f6f7; }
  .ribbon { display: flex; height: 92px; flex: none; background: #f5f6f7; border-bottom: 1px solid #dadbdc; color: #777; }
  .group { display: flex; flex-direction: column; flex: none; margin: 4px 0 1px; border-right: 1px solid #e0e2e5; }
  .clip { width: 263px; }
  .organize { width: 165px; }
  .new { width: 83px; }
  .opening { width: 130px; }
  .commands { flex: 1; min-height: 0; display: flex; }
  .group h2 { font-size: 11px; line-height: 16px; font-weight: 400; text-align: center; color: #444; }
  .big { flex-direction: column; justify-content: flex-start; align-self: flex-start; line-height: 13px; width: 66px; white-space: normal; }
  .big.short { width: 42px; }
  .clip .commands { padding-left: 6px; }
  .art { display: grid; place-items: center; height: 38px; color: #a4b2c8; }
  .stack { display: flex; flex-direction: column; }
  .stack button { height: 22px; gap: 3px; justify-content: flex-start; }
  .clip .stack { padding-left: 4px; }
  .organize .stack { width: 85px; padding: 5px 0 0 8px; }
  .organize .stack + .stack { width: 79px; padding-left: 6px; }
  .divided { border-left: 1px solid #e0e2e5; }
  .wide button { height: 29px; }
  .new .big { margin-left: 4px; }
  .new .stack { padding-left: 2px; }
  i { width: 0; height: 0; margin-left: 2px; border: 3px solid transparent; border-top-color: #aaa; border-bottom: 0; flex: none; }
  i.dark { border-top-color: #222; }
  .big i { margin-top: 5px; }
  .location { display: flex; align-items: center; height: 35px; flex: none; padding: 0 12px 0 7px; }
  .location > button { width: 24px; height: 24px; margin-right: 5px; }
  .location > .recent { width: 16px; margin-right: 0; color: #bbb; }
  .location > .recent + button { margin-right: 1px; }
  .crumbs { flex: 1; display: flex; align-items: center; gap: 3px; height: 22px; padding-left: 4px; border: 1px solid #d9d9d9; color: #666; }
  .crumbs span { color: #222; padding: 0 3px; }
  .history { margin-left: auto; }
  .reload { width: 18px; height: 20px; border-left: 1px solid #d9d9d9; }
  .find { width: 190px; height: 22px; margin-left: 12px; padding: 0 8px; border: 1px solid #d9d9d9; font: inherit; }
  .find::placeholder { color: #777; opacity: 1; }
  .panes { flex: 1; min-height: 0; display: flex; }
  .tree { width: 140px; overflow: hidden; list-style: none; flex: none; }
  .tree button { width: 100%; height: 24px; padding-left: 18px; justify-content: flex-start; }
  .tree .root button { padding-left: 10px; }
  .chev { width: 16px; margin-right: 6px; flex: none; color: #999; }
  .root .chev { color: #333; }
  .tree button > span:last-child { margin-left: 5px; }
  .active { background: #e5f3ff; }
  .treescroll { width: 15px; display: flex; flex-direction: column; align-items: center; padding: 3px 0; background: #f0f0f0; color: #555; flex: none; }
  .treescroll span { width: 15px; height: 119px; margin: 86px 0 auto; background: #cdcdcd; }
  .files { flex: 1; padding: 8px 0 0 11px; }
  h3 { display: flex; align-items: center; gap: 3px; font-size: 14px; line-height: 22px; font-weight: 400; color: #1e3287; }
  h3 span { flex: 1; height: 1px; margin-left: 2px; background: #e2e2e2; }
  .foldergrid { display: grid; grid-template-columns: repeat(2, 228px); grid-auto-rows: 64px; padding: 10px 0 0 35px; }
  .folder { align-items: flex-start; justify-content: flex-start; gap: 4px; text-align: left; }
  .folderart { position: relative; width: 42px; height: 48px; padding-top: 6px; }
  .badge { position: absolute; right: 2px; bottom: 1px; }
  .meta { display: flex; flex-direction: column; padding-top: 3px; }
  .meta b { font-weight: 400; }
  .meta small { font-size: 11px; color: #777; }
  .pinned { color: #8b959c; padding-top: 2px; }
  .status { height: 24px; flex: none; padding: 4px 14px; }

  .watermark { position: absolute; right: 48px; bottom: 48px; display: flex; align-items: center; gap: 4px; font: 700 29px/64px "Liberation Sans", sans-serif; color: #fff; text-shadow: 0 0 3px #999; }
  .watermark svg { filter: drop-shadow(0 0 2px #bbb); }

  .taskbar { position: relative; display: flex; height: 40px; flex: none; background: rgb(0 0 0 / 85%); color: #fff; }
  .start { width: 48px; }
  .tasksearch { display: flex; align-items: center; gap: 10px; width: 288px; padding-left: 11px; background: #f1f1f1; border: 1px solid #bbb; }
  .tasksearch input { flex: 1; min-width: 0; padding: 0; border: 0; background: none; font: inherit; font-size: 14px; line-height: 20px; }
  .tasksearch input::placeholder { color: #444; opacity: 1; }
  .app { width: 48px; margin-right: 2px; }
  .running { position: relative; }
  .running::after { content: ''; position: absolute; left: 4px; right: 4px; bottom: 0; height: 2px; background: #76b9ed; }
  .current { background: #37474f; }
  .current::after { left: 0; right: 0; }
  .tray { display: flex; margin-left: auto; }
  .tray button { width: 24px; }
  .clock { width: 64px; display: flex; flex-direction: column; justify-content: center; text-align: center; line-height: 18px; }
  .tray .notify { width: 40px; }
  .tray .peek { width: 5px; margin-left: 8px; border-left: 1px solid #777; }
</style>
